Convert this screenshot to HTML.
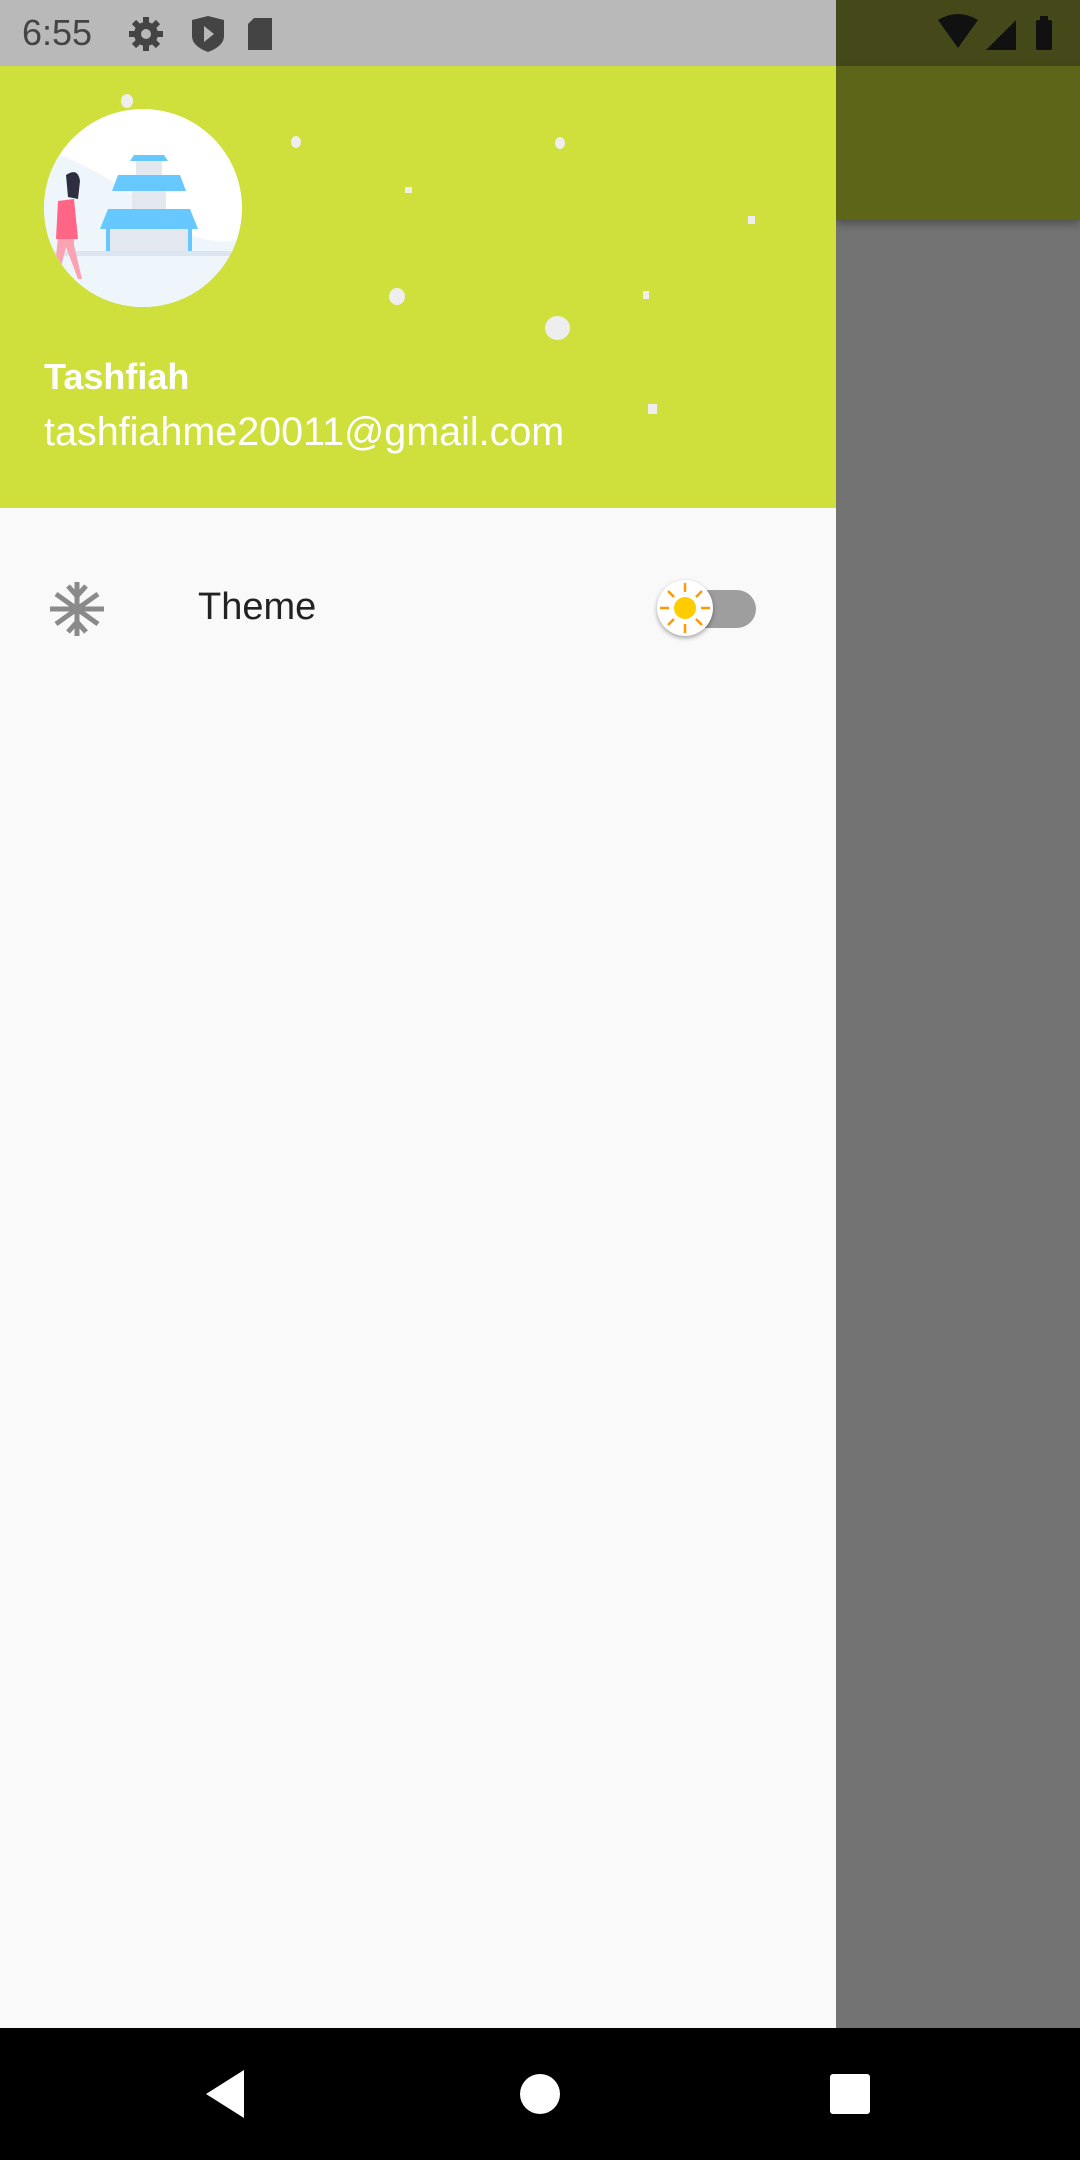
<!DOCTYPE html>
<html><head><meta charset="utf-8"><style>
*{margin:0;padding:0;box-sizing:border-box}
body{width:1080px;height:2160px;position:relative;overflow:hidden;font-family:"Liberation Sans",Roboto,sans-serif;background:#737373}
.abs{position:absolute}
</style></head><body>
<div class="abs" style="left:836px;top:0;width:244px;height:66px;background:#45491a"></div>
<div class="abs" style="left:836px;top:66px;width:244px;height:154px;background:#5d6519;box-shadow:0 4px 8px rgba(0,0,0,.3)"></div>
<svg class="abs" style="left:930px;top:14px" width="150" height="40" viewBox="0 0 150 40">
<path d="M8 6 Q28 -6 48 6 L28 34 Z" fill="#111"/>
<path d="M86 6 L86 36 L56 36 Z" fill="#111"/>
<rect x="106" y="6" width="16" height="30" rx="2" fill="#111"/><rect x="110" y="2" width="8" height="5" fill="#111"/>
</svg>
<div class="abs" style="left:0;top:0;width:836px;height:66px;background:#b9b9b9"></div>
<div class="abs" style="left:22px;top:12px;font-size:36px;color:#444">6:55</div>
<svg class="abs" style="left:126px;top:14px" width="160" height="40" viewBox="0 0 160 40">
<circle cx="20" cy="20" r="12" fill="#444"/>
<g stroke="#444" stroke-width="6"><line x1="20" y1="3" x2="20" y2="37"/><line x1="3" y1="20" x2="37" y2="20"/><line x1="8" y1="8" x2="32" y2="32"/><line x1="32" y1="8" x2="8" y2="32"/></g>
<circle cx="20" cy="20" r="5" fill="#b9b9b9"/>
<path d="M66 6 L82 2 L98 6 L98 22 Q98 32 82 38 Q66 32 66 22 Z" fill="#444"/><path d="M78 12 L88 20 L78 28 Z" fill="#b9b9b9"/>
<path d="M128 4 L146 4 L146 36 L122 36 L122 10 Z" fill="#444"/>
</svg>
<div class="abs" style="left:0;top:66px;width:836px;height:442px;background:#cfdf3b"></div>
<div class="abs" style="left:121px;top:94px;width:12px;height:14px;border-radius:50%;background:#eee"></div>
<div class="abs" style="left:291px;top:136px;width:10px;height:12px;border-radius:50%;background:#eee"></div>
<div class="abs" style="left:555px;top:137px;width:10px;height:12px;border-radius:50%;background:#eee"></div>
<div class="abs" style="left:405px;top:187px;width:7px;height:6px;background:#eee"></div>
<div class="abs" style="left:748px;top:216px;width:7px;height:8px;background:#eee"></div>
<div class="abs" style="left:389px;top:288px;width:16px;height:17px;border-radius:50%;background:#eee"></div>
<div class="abs" style="left:545px;top:316px;width:25px;height:24px;border-radius:50%;background:#eee"></div>
<div class="abs" style="left:643px;top:291px;width:6px;height:8px;background:#eee"></div>
<div class="abs" style="left:648px;top:404px;width:9px;height:10px;background:#eee"></div>
<svg class="abs" style="left:44px;top:109px" width="198" height="198" viewBox="0 0 198 198">
<defs><clipPath id="c"><circle cx="99" cy="99" r="99"/></clipPath></defs>
<circle cx="99" cy="99" r="99" fill="#fff"/>
<g clip-path="url(#c)">
<path d="M0 40 Q60 60 120 110 Q160 140 198 130 L198 198 L0 198 Z" fill="#eef6fc"/>
<rect x="0" y="142" width="198" height="5" fill="#dde6f0"/>
<path d="M90 46 L120 46 L124 52 L86 52 Z" fill="#66c8ff"/>
<rect x="92" y="52" width="26" height="14" fill="#e3e8ef"/>
<path d="M74 66 L136 66 L142 82 L68 82 Z" fill="#66c8ff"/>
<rect x="88" y="82" width="34" height="18" fill="#e3e8ef"/>
<path d="M64 100 L146 100 L154 120 L56 120 Z" fill="#66c8ff"/>
<rect x="62" y="120" width="86" height="22" fill="#e3e8ef"/>
<rect x="62" y="120" width="4" height="22" fill="#66c8ff"/><rect x="144" y="120" width="4" height="22" fill="#66c8ff"/>
<path d="M22 66 Q34 58 36 72 L34 90 L24 88 Z" fill="#2f2e41"/>
<path d="M16 94 L26 92 L30 110 L30 136 L38 170 L34 170 L22 138 L14 170 L10 168 L14 128 Z" fill="#f9a3b3"/>
<path d="M14 92 L30 90 L34 130 L12 130 Z" fill="#ff6584"/>
</g></svg>
<div class="abs" style="left:44px;top:356px;font-size:36px;font-weight:bold;color:#fff">Tashfiah</div>
<div class="abs" style="left:44px;top:410px;font-size:39.5px;color:#fff">tashfiahme20011@gmail.com</div>
<div class="abs" style="left:0;top:508px;width:836px;height:1520px;background:#f9f9f9"></div>
<svg class="abs" style="left:48px;top:580px" width="58" height="58" viewBox="0 0 58 58" stroke="#8a8a8a" stroke-width="5" fill="none">
<line x1="29" y1="2" x2="29" y2="56"/><line x1="2" y1="29" x2="56" y2="29"/>
<line x1="8" y1="14" x2="50" y2="44"/><line x1="8" y1="44" x2="50" y2="14"/>
<path d="M20 6 L29 16 L38 6 M20 52 L29 42 L38 52"/>
</svg>
<div class="abs" style="left:198px;top:586px;font-size:38px;color:#222">Theme</div>
<div class="abs" style="left:686px;top:590px;width:70px;height:38px;border-radius:19px;background:#9e9e9e"></div>
<div class="abs" style="left:657px;top:580px;width:56px;height:56px;border-radius:50%;background:#fff;box-shadow:0 2px 5px rgba(0,0,0,.35)"></div>
<svg class="abs" style="left:657px;top:580px" width="56" height="56" viewBox="0 0 56 56">
<circle cx="28" cy="28" r="11" fill="#ffcc00"/>
<g stroke="#ff9900" stroke-width="2.5"><line x1="28" y1="3" x2="28" y2="12"/><line x1="28" y1="44" x2="28" y2="53"/><line x1="3" y1="28" x2="12" y2="28"/><line x1="44" y1="28" x2="53" y2="28"/><line x1="11" y1="11" x2="17" y2="17"/><line x1="39" y1="39" x2="45" y2="45"/><line x1="45" y1="11" x2="39" y2="17"/><line x1="11" y1="45" x2="17" y2="39"/></g>
</svg>
<div class="abs" style="left:0;top:2028px;width:1080px;height:132px;background:#000"></div>
<svg class="abs" style="left:0;top:2028px" width="1080" height="132" viewBox="0 0 1080 132">
<path d="M244 42 L244 90 L206 66 Z" fill="#fff"/>
<circle cx="540" cy="66" r="20" fill="#fff"/>
<rect x="830" y="46" width="40" height="40" rx="3" fill="#fff"/>
</svg>
</body></html>
